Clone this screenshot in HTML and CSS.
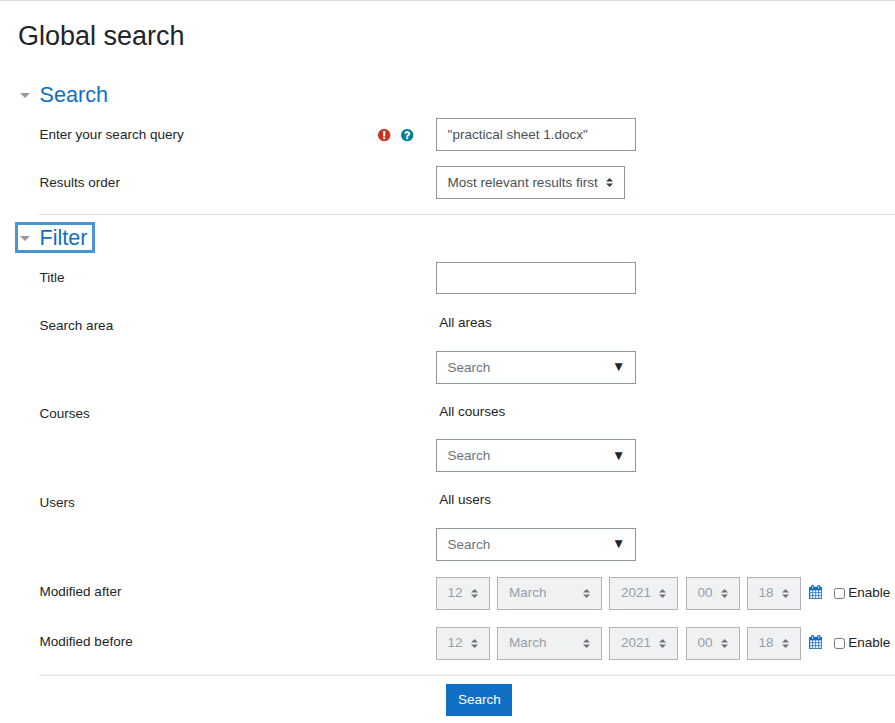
FILE: index.html
```html
<!DOCTYPE html>
<html lang="en">
<head>
<meta charset="utf-8">
<title>Global search</title>
<link rel="stylesheet" href="styles.css">
</head>
<body>
<svg class="sprite" aria-hidden="true">
  <symbol id="sort" viewBox="0 0 4 5"><path d="M2 0L0 2h4zm0 5L0 3h4z"/></symbol>
  <symbol id="calendar" viewBox="0 0 1664 1792"><path d="M128 1664h288v-288h-288v288zm352 0h320v-288h-320v288zm-352-352h288v-320h-288v320zm352 0h320v-320h-320v320zm-352-384h288v-288h-288v288zm736 736h320v-288h-320v288zm-384-736h320v-288h-320v288zm768 736h288v-288h-288v288zm-384-352h320v-320h-320v320zm-352-864v-288q0-13-9.500-22.500t-22.500-9.500h-64q-13 0-22.500 9.500t-9.500 22.500v288q0 13 9.500 22.500t22.500 9.500h64q13 0 22.500-9.500t9.500-22.500zm736 864h288v-320h-288v320zm-384-384h320v-288h-320v288zm384 0h288v-288h-288v288zm32-480v-288q0-13-9.500-22.500t-22.500-9.500h-64q-13 0-22.500 9.500t-9.500 22.500v288q0 13 9.500 22.500t22.500 9.500h64q13 0 22.500-9.500t9.500-22.500zm384-64v1280q0 52-38 90t-90 38h-1408q-52 0-90-38t-38-90v-1280q0-52 38-90t90-38h128v-96q0-66 47-113t113-47h64q66 0 113 47t47 113v96h384v-96q0-66 47-113t113-47h64q66 0 113 47t47 113v96h128q52 0 90 38t38 90z"/></symbol>
</svg>
<main class="page">
  <h1>Global search</h1>
  <form>
    <section class="group">
      <h2 class="group-title"><a class="toggle">Search</a></h2>
      <div class="row">
        <label class="label">Enter your search query</label>
        <span class="addons">
          <svg class="icon required" viewBox="0 0 1792 1792"><path d="M896 128q209 0 385.500 103t279.500 279.500 103 385.500-103 385.500-279.500 279.500-385.500 103-385.500-103-279.500-279.500-103-385.500 103-385.500 279.500-279.500 385.500-103zm128 1247v-190q0-14-9-23.500t-22-9.500h-192q-13 0-23 10t-10 23v190q0 13 10 23t23 10h192q13 0 22-9.500t9-23.500zm-2-344l18-621q0-12-10-18-10-8-24-8h-220q-14 0-24 8-10 6-10 18l17 621q0 10 10 17.500t24 7.500h185q14 0 23.500-7.500t10.500-17.500z"/></svg>
          <svg class="icon help" viewBox="0 0 1792 1792"><path d="M1024 1376v-192q0-14-9-23t-23-9h-192q-14 0-23 9t-9 23v192q0 14 9 23t23 9h192q14 0 23-9t9-23zm256-672q0-88-55.500-163t-138.500-116-170-41q-243 0-371 213-15 24 8 42l132 100q7 6 19 6 16 0 25-12 53-68 86-92 34-24 86-24 48 0 85.500 26t37.500 59q0 38-20 61t-68 45q-63 28-115.500 86.500t-52.500 125.500v36q0 14 9 23t23 9h192q14 0 23-9t9-23q0-19 21.500-49.500t54.500-49.500q32-18 49-28.500t46-35 44.500-48 28-60.500 12.500-81zm384 192q0 209-103 385.500t-279.500 279.500-385.500 103-385.500-103-279.500-279.500-103-385.500 103-385.500 279.500-279.500 385.500-103 385.500 103 279.500 279.500 103 385.500z"/></svg>
        </span>
        <div class="field"><input class="control" type="text" value='"practical sheet 1.docx"'></div>
      </div>
      <div class="row">
        <label class="label">Results order</label>
        <div class="field"><div class="select order"><span>Most relevant results first</span><svg><use href="#sort"/></svg></div></div>
      </div>
    </section>
    <section class="group filter">
      <h2 class="group-title"><a class="toggle focused">Filter</a></h2>
      <div class="row title-row">
        <label class="label">Title</label>
        <div class="field"><input class="control" type="text"></div>
      </div>
      <div class="row picker areas">
        <label class="label">Search area</label>
        <div class="field"><div class="selection">All areas</div><div class="combo"><input class="control" type="text" placeholder="Search"><span class="arrow">▼</span></div></div>
      </div>
      <div class="row picker courses">
        <label class="label">Courses</label>
        <div class="field"><div class="selection">All courses</div><div class="combo"><input class="control" type="text" placeholder="Search"><span class="arrow">▼</span></div></div>
      </div>
      <div class="row picker users">
        <label class="label">Users</label>
        <div class="field"><div class="selection">All users</div><div class="combo"><input class="control" type="text" placeholder="Search"><span class="arrow">▼</span></div></div>
      </div>
      <div class="row date">
        <label class="label">Modified after</label>
        <div class="field dates">
          <div class="select disabled"><span>12</span><svg><use href="#sort"/></svg></div>
          <div class="select disabled month"><span>March</span><svg><use href="#sort"/></svg></div>
          <div class="select disabled year"><span>2021</span><svg><use href="#sort"/></svg></div>
          <div class="select disabled"><span>00</span><svg><use href="#sort"/></svg></div>
          <div class="select disabled"><span>18</span><svg><use href="#sort"/></svg></div>
          <svg class="calendar"><use href="#calendar"/></svg>
          <label class="enable"><input type="checkbox">Enable</label>
        </div>
      </div>
      <div class="row date">
        <label class="label">Modified before</label>
        <div class="field dates">
          <div class="select disabled"><span>12</span><svg><use href="#sort"/></svg></div>
          <div class="select disabled month"><span>March</span><svg><use href="#sort"/></svg></div>
          <div class="select disabled year"><span>2021</span><svg><use href="#sort"/></svg></div>
          <div class="select disabled"><span>00</span><svg><use href="#sort"/></svg></div>
          <div class="select disabled"><span>18</span><svg><use href="#sort"/></svg></div>
          <svg class="calendar"><use href="#calendar"/></svg>
          <label class="enable"><input type="checkbox">Enable</label>
        </div>
      </div>
    </section>
    <div class="actions"><button class="submit" type="button">Search</button></div>
  </form>
</main>
</body>
</html>
```
FILE: styles.css
```css
* { box-sizing: border-box; }
body {
  margin: 0;
  background: #fff;
  color: #212529;
  font: 13.5px/20px "Liberation Sans", Arial, sans-serif;
  overflow: hidden;
}
.sprite { display: none; }
.page { border-top: 1px solid #dcdcdc; }
h1 {
  margin: 0;
  padding: 18px 0 0 17.9px;
  height: 79px;
  font-size: 27px;
  font-weight: 400;
  line-height: 34px;
}
.group {
  margin-left: 39px;
  height: 135px;
  border-bottom: 1px solid #dee2e6;
}
.filter { height: 461px; }
.group-title {
  margin: 0 0 11px -21px;
  padding-top: 2px;
  height: 27px;
  font-size: 21.6px;
  font-weight: 400;
  line-height: 25px;
}
.toggle {
  display: flex;
  align-items: center;
  width: fit-content;
  height: 25px;
  color: #0f6fc5;
}
.toggle::before {
  content: "";
  width: 0;
  margin: 1px 9.4px 0 2.2px;
  border: 5.4px solid transparent;
  border-top: 5.4px solid #999;
  border-bottom: 0;
}
.filter .group-title { padding-top: 10px; margin-bottom: 20px; }
.focused {
  width: 74px;
  outline: 3px solid #4a95d6;
}
.row {
  display: grid;
  grid-template-columns: 339px 58px 1fr;
  align-items: start;
  height: 33px;
  margin-bottom: 15px;
}
.label { padding: 7px 0 0 0.6px; }
.field { grid-column: 3; }
.addons {
  display: flex;
  gap: 8.6px;
  padding-top: 9.6px;
  margin-left: -1.2px;
}
.icon { width: 14.4px; height: 14.4px; }
.required { fill: #ca3120; }
.help { fill: #008196; }
.control {
  display: block;
  width: 200px;
  height: 33px;
  margin: 0;
  padding: 0 10.6px;
  border: 1px solid #8f959e;
  border-radius: 0;
  background: #fff;
  color: #495057;
  font: inherit;
}
.control::placeholder { color: #6c757d; opacity: 1; }
.select {
  display: flex;
  align-items: center;
  justify-content: space-between;
  width: 54px;
  height: 33px;
  padding: 0 11px 0 10.6px;
  border: 1px solid #8f959e;
  background: #fff;
  color: #495057;
  white-space: nowrap;
}
.select svg { width: 7.2px; height: 9px; fill: #343a40; }
.order { width: 189px; }
.title-row { margin-bottom: 14px; }
.title-row .label { padding-top: 6px; }
.title-row .control { height: 32px; }
.picker { height: 75px; margin-bottom: 13px; }
.courses { margin-bottom: 14px; }
.users { margin-bottom: 16px; }
.selection { height: 42px; padding: 4px 0 0 3.2px; }
.courses .selection { padding-top: 5px; }
.combo { position: relative; width: 200px; }
.arrow { position: absolute; left: 176px; top: 6px; }
.courses .arrow { top: 7px; }
.date { margin-bottom: 17px; }
.date .label { padding-top: 5px; }
.dates { display: flex; gap: 7px; }
.disabled { background: #e9ecef; color: #6c757d; opacity: .7; }
.disabled span { margin-top: -2px; }
.month, .year { padding-left: 11px; }
.month { width: 105px; }
.year { width: 69px; margin-right: 1px; }
.calendar {
  width: 13.4px;
  height: 14.4px;
  margin: 7.6px 0 0 1px;
  fill: #0f6fc5;
  stroke: #0f6fc5;
  stroke-width: 30px;
}
.enable { display: flex; align-items: center; height: 31px; margin-left: 4.6px; }
.enable input { width: 11px; height: 11px; margin: 2px 3.2px 0 0; }
.actions { padding: 8px 0 0 446px; }
.submit {
  display: block;
  width: 66px;
  height: 32px;
  padding: 0 0 0 0.6px;
  border: 0;
  background: #0f6fc5;
  color: #fff;
  font: inherit;
}
```
